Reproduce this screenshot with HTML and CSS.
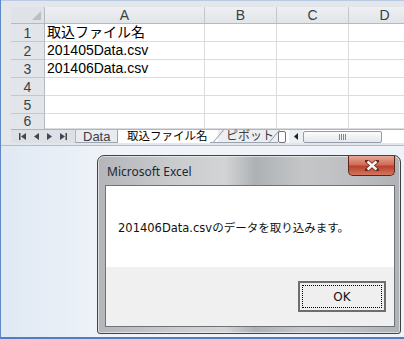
FILE: index.html
```html
<!DOCTYPE html>
<html lang="ja">
<head>
  <meta charset="UTF-8" />
  <title>取込ファイル名</title>
  <link rel="stylesheet" href="styles.css">
</head>
<body>

  <!-- Excel window -->
  <div class="excel">
    <div class="sheet">
      <div class="corner"><span class="corner-mark"></span></div>
      <div class="col-head">A</div>
      <div class="col-head">B</div>
      <div class="col-head">C</div>
      <div class="col-head">D</div>

      <div class="row-head">1</div>
      <div class="cell">取込ファイル名</div>
      <div class="cell"></div><div class="cell"></div><div class="cell"></div>

      <div class="row-head">2</div>
      <div class="cell">201405Data.csv</div>
      <div class="cell"></div><div class="cell"></div><div class="cell"></div>

      <div class="row-head">3</div>
      <div class="cell">201406Data.csv</div>
      <div class="cell"></div><div class="cell"></div><div class="cell"></div>

      <div class="row-head">4</div>
      <div class="cell"></div><div class="cell"></div><div class="cell"></div><div class="cell"></div>

      <div class="row-head">5</div>
      <div class="cell"></div><div class="cell"></div><div class="cell"></div><div class="cell"></div>

      <div class="row-head row-last">6</div>
      <div class="cell"></div><div class="cell"></div><div class="cell"></div><div class="cell"></div>
    </div>

    <!-- Sheet tabs + horizontal scrollbar -->
    <div class="tab-bar">
      <div class="tab-nav">
        <svg width="7" height="7" viewBox="0 0 7 7"><rect x="0" y="0" width="1.5" height="7" fill="#445"/><path d="M7 0 L2 3.5 L7 7 Z" fill="#445"/></svg>
        <svg width="5" height="7" viewBox="0 0 5 7"><path d="M5 0 L0 3.5 L5 7 Z" fill="#445"/></svg>
        <svg width="5" height="7" viewBox="0 0 5 7"><path d="M0 0 L5 3.5 L0 7 Z" fill="#445"/></svg>
        <svg width="7" height="7" viewBox="0 0 7 7"><path d="M0 0 L5 3.5 L0 7 Z" fill="#445"/><rect x="5.5" y="0" width="1.5" height="7" fill="#445"/></svg>
      </div>
      <div class="tab tab-data">Data</div>
      <div class="tab tab-active">取込ファイル名</div>
      <div class="tab tab-slant">ピボット</div>
      <div class="split-box"></div>
      <div class="scroll-left">
        <svg width="4" height="7" viewBox="0 0 4 7"><path d="M4 0 L0 3.5 L4 7 Z" fill="#222"/></svg>
      </div>
      <div class="scroll-thumb"><span class="grip"></span></div>
    </div>
  </div>

  <!-- Message box -->
  <div class="desktop">
    <div class="dialog">
      <div class="title-bar">
        <span class="title">Microsoft Excel</span>
        <div class="close-btn">
          <svg width="14" height="11" viewBox="0 0 14 11">
            <path d="M2 1 L12 10 M12 1 L2 10" stroke="#6b2a1e" stroke-width="4" stroke-linecap="square"/>
            <path d="M2.5 1.5 L11.5 9.5 M11.5 1.5 L2.5 9.5" stroke="#f4f4f4" stroke-width="2.4"/>
          </svg>
        </div>
      </div>
      <div class="client">
        <div class="message">201406Data.csvのデータを取り込みます。</div>
        <div class="actions">
          <button class="ok-btn"><span class="ok-focus">OK</span></button>
        </div>
      </div>
    </div>
  </div>

</body>
</html>
```

FILE: styles.css
```css
/* Basic Reset */
* {
  margin: 0;
  padding: 0;
  box-sizing: border-box;
}
body {
  width: 404px;
  height: 339px;
  overflow: hidden;
  background: linear-gradient(90deg, #dfe8f3, #f1f5fa 30%, #eef3f9);
  border-left: 1px solid #5d88c6;
  border-bottom: 2px solid #4f7fc2;
  font-family: "Liberation Sans", "Noto Sans CJK JP", sans-serif;
}

/* Excel window */
.excel {
  background: #e3e7ec;
  border-top: 1px solid #b9cbe2;
  padding: 6px 0 2px 10px;
  border-bottom: 1px solid #b5bcc6;
  overflow: hidden;
}
.sheet {
  display: grid;
  grid-template-columns: 34px 160px 72px 72px 72px;
  grid-template-rows: 17px repeat(5, 18px) 15px;
  height: 122px;
  overflow: hidden;
  background: #fff;
}
.corner {
  position: relative;
  background: #dfe3e8;
  border-right: 1px solid #b4bac2;
  border-bottom: 1px solid #b4bac2;
}
.corner-mark {
  position: absolute;
  right: 3px;
  bottom: 3px;
  width: 0;
  height: 0;
  border-left: 9px solid transparent;
  border-bottom: 9px solid #b9bfc7;
}
.col-head {
  background: linear-gradient(#eef0f3, #e1e4e8);
  border-right: 1px solid #c3c8cf;
  border-bottom: 1px solid #b4bac2;
  color: #3a3f45;
  font-size: 14px;
  text-align: center;
  line-height: 16px;
}
.row-head {
  background: #e2e5e9;
  border-right: 1px solid #b4bac2;
  border-bottom: 1px solid #c3c8cf;
  color: #3a3f45;
  font-size: 14px;
  text-align: center;
  line-height: 18px;
}
.row-last {
  line-height: 15px;
  border-bottom: none;
}
.cell {
  border-right: 1px solid #dadcdf;
  border-bottom: 1px solid #dadcdf;
  font-size: 14px;
  color: #000;
  line-height: 17px;
  padding-left: 2px;
  white-space: nowrap;
}

/* Tab bar */
.tab-bar {
  display: flex;
  align-items: stretch;
  height: 14px;
  background: #fff;
  border-top: 1px solid #aeb5bf;
}
.tab-nav {
  width: 65px;
  display: flex;
  align-items: center;
  justify-content: space-around;
  padding: 0 4px;
  background: #dde1e6;
  border-right: 1px solid #b0b7c0;
}
.tab {
  font-size: 12px;
  line-height: 13px;
  color: #3a3f45;
  white-space: nowrap;
}
.tab-data {
  width: 42px;
  padding-left: 7px;
  font-size: 13px;
  background: #e8ebef;
  border-right: 1px solid #9aa3ae;
  border-bottom: 1px solid #9aa3ae;
}
.tab-active {
  position: relative;
  z-index: 1;
  width: 92px;
  padding-left: 9px;
  color: #000;
  font-size: 11.5px;
}
.tab-slant {
  position: relative;
  width: 68px;
  padding-left: 16px;
  background: linear-gradient(90deg, #fff 8px, #eceef1 8px);
  border-bottom: 1px solid #9aa3ae;
}
.tab-slant::before,
.tab-slant::after {
  content: "";
  position: absolute;
  top: 0;
  bottom: 0;
  width: 1px;
  background: #8e97a3;
  transform: skewX(-40deg);
}
.tab-slant::before { left: 8px; }
.tab-slant::after { right: 3px; }
.split-box {
  width: 8px;
  margin: 1px 3px 0 0;
  border: 1px solid #6c737c;
  border-radius: 2px;
  background: #fff;
}
.scroll-left {
  width: 14px;
  display: flex;
  align-items: center;
  justify-content: center;
  background: #edf0f3;
}
.scroll-thumb {
  width: 79px;
  margin: 1px 0 0 0;
  border: 1px solid #959ca6;
  border-radius: 2px;
  background: linear-gradient(#fafbfc, #e5e8ec);
  display: flex;
  align-items: center;
  justify-content: center;
}
.grip {
  width: 7px;
  height: 6px;
  background: repeating-linear-gradient(90deg, #7f8791 0 1px, transparent 1px 2px);
}

/* Desktop behind the message box */
.desktop {
  padding: 9px 0 0 96px;
}

/* Message box */
.dialog {
  width: 304px;
  height: 179px;
  display: flex;
  flex-direction: column;
  border: 1px solid #404448;
  border-radius: 7px 7px 3px 3px;
  padding: 0 5px 6px 7px;
  background: linear-gradient(90deg, #b3b5b8, #c9cbcd 25%, #d3d4d6 42%, #aeb1b4 52%, #c4c6c8 68%, #bcbec1 85%, #afb2b6);
  box-shadow: inset 0 0 0 1px rgba(255, 255, 255, 0.55);
}
.title-bar {
  height: 29px;
  display: flex;
  align-items: center;
}
.title {
  font-family: "Noto Sans", sans-serif;
  font-size: 12px;
  color: #1c2733;
  padding-left: 2px;
  margin-top: 2px;
}
.close-btn {
  align-self: flex-start;
  margin-left: auto;
  width: 47px;
  height: 20px;
  display: flex;
  align-items: center;
  justify-content: center;
  border: 1px solid #5e2419;
  border-top: none;
  border-radius: 0 0 5px 5px;
  background: linear-gradient(#e7a898, #d06c58 45%, #b9412d 55%, #d5765f);
}
.client {
  flex: 1;
  display: flex;
  flex-direction: column;
  border: 1px solid #6c737b;
}
.message {
  height: 81px;
  background: #fff;
  padding: 33px 0 0 12px;
  font-family: "DejaVu Sans", "Noto Sans CJK JP", sans-serif;
  font-size: 11.5px;
  color: #111;
  white-space: nowrap;
}
.actions {
  flex: 1;
  background: #f0f0f0;
  display: flex;
  justify-content: flex-end;
  align-items: flex-start;
  padding: 14px 8px 0 0;
}
.ok-btn {
  width: 88px;
  height: 31px;
  padding: 2px;
  border: 2px solid #6e6e6e;
  background: #efefef;
  font-family: "DejaVu Sans", sans-serif;
  font-size: 12px;
  color: #111;
}
.ok-focus {
  display: flex;
  align-items: center;
  justify-content: center;
  height: 100%;
  border: 1px dotted #000;
}
```
